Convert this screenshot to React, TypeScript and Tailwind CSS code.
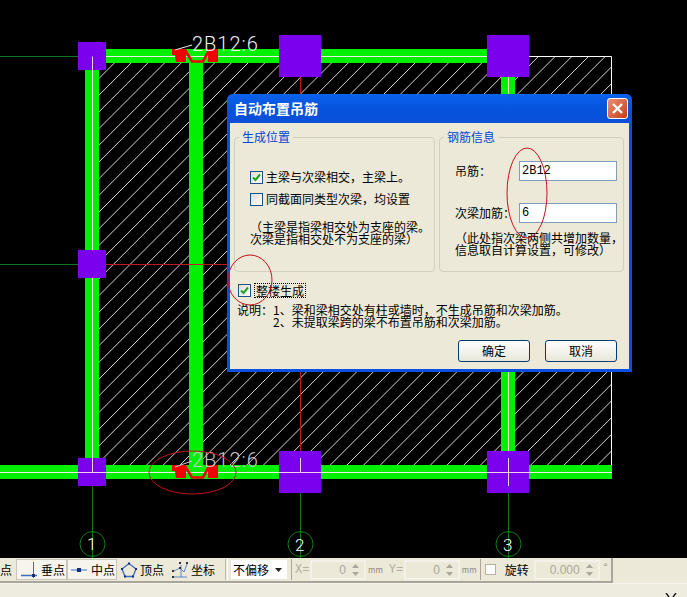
import React from "react";

const HATCH = Array.from({ length: 60 }, (_, i) => 92 + i * 16.7);

function CadDrawing() {
  return (
    <svg width="687" height="558" viewBox="0 0 687 558" className="block">
      <defs>
        <clipPath id="slab">
          <rect x="92" y="56" width="520" height="416" />
        </clipPath>
      </defs>
      {/* axis lines */}
      <g stroke="#0c7a1c" strokeWidth="1" fill="none">
        <path d="M0 56.5H92M0 264.5H106" />
        <path d="M92.5 486V558M300.5 493V558M508.5 493V558" />
        <circle cx="92.5" cy="544" r="12.5" />
        <circle cx="300.5" cy="544" r="12.5" />
        <circle cx="508.5" cy="544" r="12.5" />
      </g>
      {/* slab hatch */}
      <g clipPath="url(#slab)" stroke="#d8d8d8" strokeWidth="1">
        {HATCH.map((x) => (
          <line key={x} x1={x} y1="472" x2={x + 416} y2="56" transform="translate(-420 0)" />
        ))}
      </g>
      <path d="M92.5 56.5H611.5V472.5H92.5Z" fill="none" stroke="#fff" strokeWidth="1" />
      {/* beams */}
      <g fill="#00f000">
        <rect x="85" y="49" width="14" height="430" />
        <rect x="189" y="56" width="14" height="416" />
        <rect x="501" y="49" width="14" height="430" />
        <rect x="92" y="49" width="423" height="14" />
        <rect x="0" y="465" width="612" height="14" />
      </g>
      <path d="M92.5 56.5H508.5M92.5 56.5V472M0 472.5H612" stroke="#f4e8e8" strokeWidth="1" fill="none" />
      <path d="M508.5 56V472" stroke="#f0f0c0" strokeWidth="1" fill="none" />
      {/* secondary reference lines */}
      <path d="M106 264.5H228M300.5 77V451" stroke="#c0181c" strokeWidth="1" fill="none" />
      {/* columns */}
      <g fill="#7a00ee">
        <rect x="78" y="42" width="28" height="28" />
        <rect x="78" y="250" width="28" height="28" />
        <rect x="78" y="458" width="28" height="28" />
        <rect x="279" y="35" width="42" height="42" />
        <rect x="487" y="35" width="42" height="42" />
        <rect x="279" y="451" width="42" height="42" />
        <rect x="487" y="451" width="42" height="42" />
      </g>
      <path d="M92.5 56.5V70M92.5 458V472.5M78 472.5H106M300.5 458V472.5H321M279 472.5H300M487 472.5H529M508.5 458V486" stroke="#f4d0f0" strokeWidth="1" fill="none" />
      {/* hanger bars */}
      <g fill="#f00000">
        <path d="M172 49H186V62H176L175 55H172Z" />
        <path d="M218 49H208V62H218Z" />
        <path d="M172 465H186V478H176L175 471H172Z" />
        <path d="M218 465H208V478H218Z" />
      </g>
      <g fill="none" stroke="#f00000" strokeWidth="2.6">
        <path d="M185 50L192 61.5H203L209 50" />
        <path d="M185 466L192 477.5H203L209 466" />
      </g>
      {/* labels */}
      <g fontFamily="Roboto, sans-serif" fontWeight="300" fontSize="20" letterSpacing="1">
        <path d="M175 50L192 45" stroke="#f0f0f0" strokeWidth="1" />
        <text x="192" y="51" fill="#f0f0f0">2B12:6</text>
        <path d="M175 467L192 461" stroke="#d0d0d0" strokeWidth="1" />
        <text x="192" y="467" fill="#c8c8c8">2B12:6</text>
        <text x="87" y="550" fill="#fff" fontSize="17">1</text>
        <text x="295" y="551" fill="#fff" fontSize="17">2</text>
        <text x="503" y="551" fill="#fff" fontSize="17">3</text>
      </g>
    </svg>
  );
}

function Check({ on, className }: { on?: boolean; className: string }) {
  return (
    <span className={`flex h-[13px] w-[13px] shrink-0 items-center justify-center border border-[#1c5180] bg-gradient-to-br from-[#dcdcd7] to-white ${className}`}>
      {on && (
        <svg width="9" height="9" viewBox="0 0 9 9">
          <path d="M1 4.5L3.5 7L8 1.5" fill="none" stroke="#21a121" strokeWidth="2" />
        </svg>
      )}
    </span>
  );
}

function Field({ value, label }: { value: string; label: string }) {
  return (
    <div className="flex items-center">
      <span className="w-[64px] text-[12px]">{label}</span>
      <div className="flex h-[20px] w-[98px] items-center border border-[#7f9db9] bg-white pl-[2px] font-['Liberation_Mono',monospace] text-[12px]">
        {value}
      </div>
    </div>
  );
}

function XpButton({ children }: { children: React.ReactNode }) {
  return (
    <button className="flex h-[22px] w-[72px] items-center justify-center rounded-[3px] border border-[#003c74] bg-gradient-to-b from-white to-[#e8e6da] text-[12px] text-black">
      {children}
    </button>
  );
}

function Dialog() {
  return (
    <div className="absolute left-[227px] top-[94px] flex h-[278px] w-[405px] flex-col overflow-hidden rounded-t-[6px] bg-[#0a50e0] text-black">
      <div className="flex h-[29px] shrink-0 items-center justify-between bg-gradient-to-b from-[#0a62ee] via-[#0653dc] to-[#0a4fd8] pl-[7px] pr-[4px]">
        <span className="text-[14px] font-bold text-white">自动布置吊筋</span>
        <span className="flex h-[21px] w-[21px] items-center justify-center rounded-[3px] border border-white bg-gradient-to-br from-[#e99070] to-[#c53a14]">
          <svg width="13" height="13" viewBox="0 0 13 13">
            <path d="M2 2L11 11M11 2L2 11" stroke="#fff" strokeWidth="2.4" />
          </svg>
        </span>
      </div>
      <div className="mx-[3px] mb-[3px] flex flex-1 flex-col bg-[#ece9d8] px-[4px] pt-[7px]">
        <div className="flex h-[142px] gap-[4px]">
          <fieldset className="h-[142px] w-[201px] rounded-[4px] border border-[#d0d0bf] pl-[15px] pt-[26px]">
            <legend className="-ml-[11px] px-[3px] text-[12px] leading-[14px] text-[#0046d5]">生成位置</legend>
            <div className="flex h-[14px] items-center text-[12px]">
              <Check on className="mr-[3px]" />
              主梁与次梁相交，主梁上。
            </div>
            <div className="mt-[8px] flex h-[14px] items-center text-[12px]">
              <Check className="mr-[3px]" />
              同截面同类型次梁，均设置
            </div>
            <p className="mt-[15px] whitespace-nowrap text-[12px] leading-[12px]">
              （主梁是指梁相交处为支座的梁。
              <br />
              次梁是指相交处不为支座的梁）
            </p>
          </fieldset>
          <fieldset className="h-[142px] w-[185px] rounded-[4px] border border-[#d0d0bf] pl-[15px] pt-[17px]">
            <legend className="-ml-[11px] px-[3px] text-[12px] leading-[14px] text-[#0046d5]">钢筋信息</legend>
            <Field label="吊筋：" value="2B12" />
            <div className="mt-[22px]">
              <Field label="次梁加筋：" value="6" />
            </div>
            <p className="mt-[9px] whitespace-nowrap text-[12px] leading-[12px]">
              （此处指次梁两侧共增加数量，
              <br />
              信息取自计算设置，可修改）
            </p>
          </fieldset>
        </div>
        <div className="ml-[4px] mt-[11px] flex h-[14px] items-center text-[12px]">
          <Check on className="mr-[3px]" />
          <span className="border border-dotted border-black px-px leading-[13px]">整楼生成</span>
        </div>
        <p className="ml-[3px] mt-[7px] whitespace-nowrap text-[12px] leading-[12px]">
          说明：1、梁和梁相交处有柱或墙时，不生成吊筋和次梁加筋。
          <br />
          <span className="ml-[36px]">2、未提取梁跨的梁不布置吊筋和次梁加筋。</span>
        </p>
        <div className="mr-[8px] mt-[12px] flex justify-end gap-[15px]">
          <XpButton>确定</XpButton>
          <XpButton>取消</XpButton>
        </div>
      </div>
    </div>
  );
}

function Spin() {
  return (
    <svg width="9" height="14" viewBox="0 0 9 14" className="shrink-0">
      <path d="M4.5 1L8 5H1ZM4.5 13L1 9H8Z" fill="#a8a89c" />
    </svg>
  );
}

function NumInput({ value, width }: { value: string; width: string }) {
  return (
    <div className={`flex h-[20px] items-center justify-end gap-[5px] border-2 border-[#f4f2e8] pr-[4px] font-['Liberation_Sans',sans-serif] text-[12px] text-[#a8a89c] ${width}`}>
      {value}
      <Spin />
    </div>
  );
}

function Toolbar() {
  return (
    <div className="flex h-[25px] w-[613px] shrink-0 items-center whitespace-nowrap border-b-2 border-r-2 border-[#a8a69a] text-[12px]">
      <span className="w-[16px] shrink-0">点</span>
      <div className="flex h-[21px] w-[51px] shrink-0 items-center gap-[4px] border border-[#c8c6ba] bg-[#f6f4ec] pl-[4px]">
        <svg width="16" height="16" viewBox="0 0 16 16" className="shrink-0">
          <path d="M0 13.5H16" stroke="#3a6cc0" strokeWidth="1.5" />
          <path d="M12.5 0V16" stroke="#3a6cc0" strokeWidth="1" />
          <rect x="11" y="12" width="3" height="3" fill="#12307c" />
        </svg>
        <span>垂点</span>
      </div>
      <div className="flex h-[21px] w-[50px] shrink-0 items-center gap-[4px] border border-[#c8c6ba] bg-[#f6f4ec] pl-[3px]">
        <svg width="16" height="16" viewBox="0 0 16 16" className="shrink-0">
          <path d="M0 8H16" stroke="#5a86cc" strokeWidth="1.2" />
          <rect x="6" y="6" width="4" height="4" fill="#12307c" />
        </svg>
        <span>中点</span>
      </div>
      <svg width="16" height="16" viewBox="0 0 16 16" className="ml-[4px] shrink-0">
        <path d="M8 1.5L15 7L12 14.5H4L1 7Z" fill="none" stroke="#3a6cc0" strokeWidth="1.3" />
        <path d="M7 .5h2v2H7zM14 6h2v2h-2zM11 13.5h2v2h-2zM3 13.5h2v2H3zM0 6h2v2H0z" fill="#12307c" />
      </svg>
      <span className="ml-[3px]">顶点</span>
      <svg width="18" height="18" viewBox="0 0 18 18" className="ml-[7px] shrink-0">
        <path d="M2 16H16M10 4V16M3 10L9 7L13 11L16 3" fill="none" stroke="#5a86cc" strokeWidth="1" />
        <path d="M1 9h2v2H1zM8 1h2v2H8zM15 1h2v2h-2zM1 15h2v2H1zM8 6h2v2H8z" fill="#333" />
      </svg>
      <span className="ml-[2px]">坐标</span>
      <span className="ml-[10px] h-[21px] w-[3px] shrink-0 border-x border-l-[#bdbbaf] border-r-white" />
      <div className="ml-[3px] flex h-[19px] w-[56px] shrink-0 items-center justify-between bg-white pl-[2px] pr-[5px] text-[12px]">
        不偏移
        <svg width="7" height="4" viewBox="0 0 7 4">
          <path d="M0 0H7L3.5 4Z" fill="#222" />
        </svg>
      </div>
      <span className="ml-[4px] h-[21px] w-px shrink-0 bg-[#a8a69a]" />
      <span className="ml-[3px] w-[12px] shrink-0 font-['Liberation_Mono',monospace] text-[#b0ae9f]">X=</span>
      <div className="ml-[3px] shrink-0">
        <NumInput value="0" width="w-[56px]" />
      </div>
      <span className="ml-[2px] text-[8px] text-[#8c8a7e]">mm</span>
      <span className="ml-[6px] w-[12px] shrink-0 font-['Liberation_Mono',monospace] text-[#b0ae9f]">Y=</span>
      <div className="ml-[3px] shrink-0">
        <NumInput value="0" width="w-[56px]" />
      </div>
      <span className="ml-[2px] text-[8px] text-[#8c8a7e]">mm</span>
      <span className="ml-[3px] h-[21px] w-px shrink-0 bg-[#a8a69a]" />
      <span className="ml-[4px] h-[11px] w-[11px] shrink-0 border border-[#b4b2a6] bg-white" />
      <span className="ml-[9px]">旋转</span>
      <div className="ml-[5px] shrink-0">
        <NumInput value="0.000" width="w-[66px]" />
      </div>
      <span className="-mt-[6px] ml-[4px] text-[10px] text-[#8c8a7e]">°</span>
    </div>
  );
}

export default function App() {
  return (
    <div className="flex h-[597px] w-[687px] flex-col overflow-hidden bg-[#ece9d8] font-['Noto_Sans_CJK_SC','Liberation_Sans',sans-serif]">
      <div className="relative h-[558px] shrink-0 bg-black">
        <CadDrawing />
        <Dialog />
        {/* hand-drawn red marks sit on top of everything */}
        <svg width="687" height="558" className="pointer-events-none absolute inset-0">
          <g fill="none" stroke="#c8101c" strokeWidth="1">
            <ellipse cx="527" cy="193" rx="20" ry="45" />
            <ellipse cx="250" cy="280" rx="22" ry="25" />
            <ellipse cx="192.5" cy="472.5" rx="43.5" ry="21.5" />
          </g>
        </svg>
      </div>
      <Toolbar />
      <div className="flex flex-1 items-end justify-end border-t border-[#f6f4ec] bg-[#eeecdf] pr-[10px]">
        <svg width="12" height="4" viewBox="0 0 12 4">
          <path d="M1 0L4 4M11 0L8 4" stroke="#222" strokeWidth="1.5" />
        </svg>
      </div>
    </div>
  );
}
